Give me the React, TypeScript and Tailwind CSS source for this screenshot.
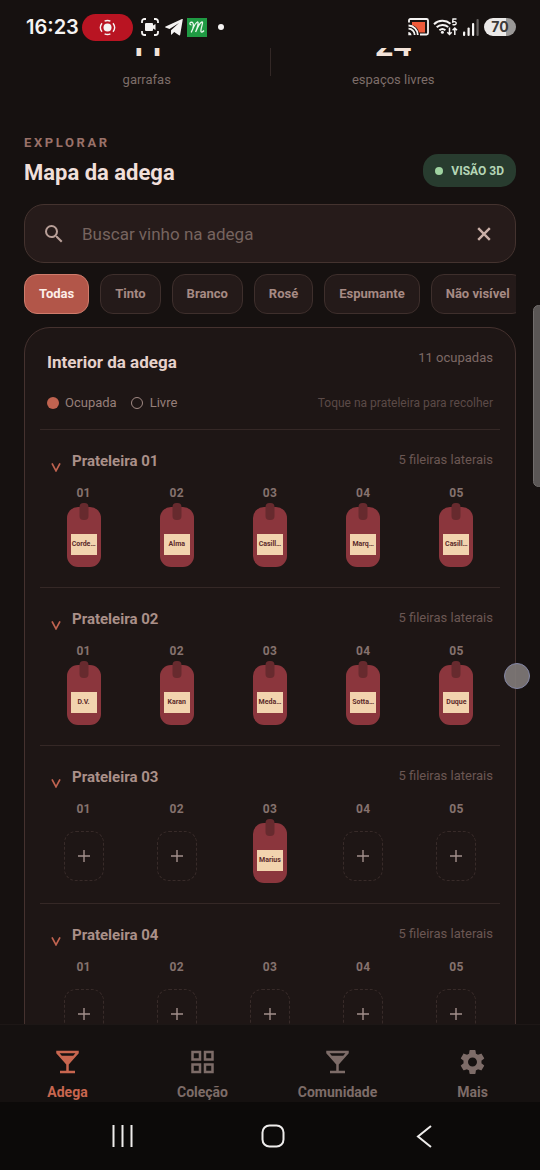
import type { ReactNode } from "react";
import { MdGridView, MdLocalBar, MdSearch, MdSettings } from "react-icons/md";

const filters = ["Todas", "Tinto", "Branco", "Rosé", "Espumante", "Não visível"];

const shelves: { name: string; slots: (string | null)[] }[] = [
  { name: "Prateleira 01", slots: ["Corde…", "Alma", "Casill…", "Marq…", "Casill…"] },
  { name: "Prateleira 02", slots: ["D.V.", "Karan", "Meda…", "Sotta…", "Duque"] },
  { name: "Prateleira 03", slots: [null, null, "Marius", null, null] },
  { name: "Prateleira 04", slots: [null, null, null, null, null] },
];

function StatusBar() {
  return (
    <header className="flex h-12 shrink-0 items-center justify-between pt-1.5 pr-6 pl-[26px] text-[#f5f3f2]">
      <div className="flex items-center">
        <span className="w-14 font-['Inter',sans-serif] text-[20px] leading-6 font-semibold">16:23</span>
        <span className="flex h-[27px] w-[51px] items-center justify-center rounded-full bg-[#b91422]">
          <svg width="17" height="17" viewBox="0 0 17 17" fill="none" stroke="currentColor" strokeWidth="1.4">
            <circle cx="8.5" cy="8.5" r="4" fill="currentColor" stroke="none" />
            <path d="M5.6 2.1a7 7 0 0 1 5.8 0M14 4.2a7 7 0 0 1 0 8.6M11.4 14.9a7 7 0 0 1-5.8 0M3 12.8a7 7 0 0 1 0-8.6" />
          </svg>
        </span>
        <svg className="ml-2" width="18" height="18" viewBox="0 0 18 18" fill="none" stroke="currentColor" strokeWidth="1.8">
          <path d="M1 5V3.5A2.5 2.5 0 0 1 3.5 1H5M13 1h1.5A2.5 2.5 0 0 1 17 3.5V5M17 13v1.5a2.5 2.5 0 0 1-2.5 2.5H13M5 17H3.5A2.5 2.5 0 0 1 1 14.5V13" />
          <path d="M5 5h6q1 0 1 1v1.500l2.500-1.600v6.200L12 10.500V12q0 1-1 1H5q-1 0-1-1V6q0-1 1-1z" fill="currentColor" stroke="none" />
        </svg>
        <svg className="ml-1.5" width="18" height="17" viewBox="0 0 18 17" fill="currentColor">
          <path d="M17.8.3 15.2 15.8q-.2.9-1.200.5L9.200 13l-2.500 2.600q-.6.400-.7-.4V11.300L14 4 4.500 9.900.5 8.600q-.9-.5.100-1.100L17 .1q.8-.3.8.2z" />
        </svg>
        <svg className="ml-1" width="20" height="19" viewBox="0 0 20 19">
          <rect width="20" height="19" fill="#1f9a43" />
          <path
            d="M4.500 6.800C2.600 7 2.200 4.300 4.400 4.200c3 0 2.400 6-.2 10.200C6.200 10 8 5 10.400 4c1.600-.4.200 5.500-1.800 10 2-5 4.400-9.500 6.400-10 1.800-.2-1.800 7.500-1 9.500.5 1.200 2 .4 3-1"
            fill="none"
            stroke="#e9f7ec"
            strokeWidth="1.3"
          />
        </svg>
        <span className="ml-[11px] size-1.5 rounded-full bg-[#f5f3f2]" />
      </div>
      <div className="flex items-center">
        <svg width="21" height="18" viewBox="0 0 21 18" fill="none" stroke="currentColor" strokeWidth="1.800">
          <path d="M4 4h13v10.500h-6A10 10 0 0 0 4 7z" fill="#ee5a3a" stroke="none" />
          <path d="M1 4.500V2.500Q1 1 2.500 1h16Q20 1 20 2.500v12.500q0 1.500-1.500 1.500H12" />
          <path d="M.5 7.500a9.500 9.500 0 0 1 9.300 9.500M.5 10.700a6.200 6.200 0 0 1 6.200 6.300" />
          <path d="M.3 14a3.500 3.500 0 0 1 3.200 3.300H.3z" fill="currentColor" stroke="none" />
        </svg>
        <svg className="ml-1" width="26" height="18" viewBox="0 0 26 18" fill="none" stroke="currentColor" strokeWidth="2">
          <path d="M1 6.200a12.500 12.500 0 0 1 16.500-.5M3.700 9.300a8.500 8.500 0 0 1 11.500-.2M6.400 12.200a4.700 4.700 0 0 1 6 0" />
          <circle cx="9.400" cy="14.300" r="1.500" fill="currentColor" stroke="none" />
          <path d="M16.500 9.500v7M14.300 14.200l2.200 2.300 2.200-2.300M21.800 17v-7M19.600 12.300l2.200-2.300 2.200 2.300" strokeWidth="1.500" />
          <path d="M23.500 1h-3.500l-.3 3c2-.8 3.800-.2 3.500 1.400-.2 1.500-2.200 1.800-3.700.9" strokeWidth="1.400" />
        </svg>
        <svg className="ml-1" width="17" height="17" viewBox="0 0 17 17" fill="currentColor">
          <rect x="0" y="12.500" width="2.200" height="4.500" rx="1" />
          <rect x="4.500" y="8.500" width="2.200" height="8.500" rx="1" />
          <rect x="9" y="4" width="2.200" height="13" rx="1" />
          <rect x="13.500" y="0" width="2.200" height="17" rx="1" opacity=".35" />
        </svg>
        <span className="ml-1 flex h-[18px] w-8 items-center justify-center rounded-full bg-linear-to-r from-[#ebe9e8] from-70% to-[#9a9897] to-70% font-['Inter',sans-serif] text-[14px] leading-[18px] font-bold text-[#3c3a39]">
          70
        </span>
      </div>
    </header>
  );
}

function Stat({ value, label }: { value: string; label: string }) {
  return (
    <div className="flex flex-col items-center">
      <span className="text-[32px] leading-10 font-bold text-[#f3e3d8]">{value}</span>
      <span className="mt-[5px] text-[13px] leading-5 text-[#7d6d69]">{label}</span>
    </div>
  );
}

function Bottle({ name }: { name: string }) {
  return (
    <button className="relative flex h-[60px] w-[34px] flex-col items-center rounded-[11px] bg-[#8b363d] pt-[27px]">
      <span className="absolute -top-1 left-1/2 h-[17px] w-[9px] -translate-x-1/2 rounded-[4px] bg-[#672a2e]" />
      <span className="h-[21px] w-[26px] overflow-hidden bg-[#f2d3ae] text-center text-[7px] leading-[21px] font-bold whitespace-nowrap text-[#5c2a2a]">
        {name}
      </span>
    </button>
  );
}

function EmptySlot() {
  return (
    <button
      aria-label="Adicionar vinho"
      className="mt-2 flex h-[50px] w-10 items-center justify-center rounded-[12px] border border-dashed border-[#382b29] text-[#a3908c]"
    >
      <svg width="12" height="12" viewBox="0 0 12 12" stroke="currentColor" strokeWidth="1.400">
        <path d="M6 0v12M0 6h12" />
      </svg>
    </button>
  );
}

function Shelf({ name, slots }: { name: string; slots: (string | null)[] }) {
  return (
    <section className="h-[158px] border-t border-[#352826] pt-5">
      <button className="flex w-full items-start justify-between px-[7px] text-left">
        <span className="flex items-start">
          <svg className="mt-[13px] ml-1 text-[#c06350]" width="10" height="9" viewBox="0 0 10 9" fill="none" stroke="currentColor" strokeWidth="1.700">
            <path d="M1 .4 5 7.800 9 .4" />
          </svg>
          <span className="ml-[11px] text-[15px] leading-[22px] font-bold text-[#aa9089]">{name}</span>
        </span>
        <span className="text-[13px] leading-5 text-[#6b5753]">5 fileiras laterais</span>
      </button>
      <ol className="mt-2.5 grid grid-cols-5 gap-1.5">
        {slots.map((slot, i) => (
          <li key={i} className="flex flex-col items-center">
            <span className="mb-[3px] text-[12px] leading-[22px] font-bold tracking-wide text-[#85726e]">0{i + 1}</span>
            {slot ? <Bottle name={slot} /> : <EmptySlot />}
          </li>
        ))}
      </ol>
    </section>
  );
}

function Tab({ icon, label, active }: { icon: ReactNode; label: string; active?: boolean }) {
  return (
    <a
      href="#"
      className={
        "flex flex-1 flex-col items-center gap-[5px] pt-[22px] text-[31px] " +
        (active ? "text-[#c8664f]" : "text-[#7d6c68]")
      }
    >
      {icon}
      <span className="text-[14px] leading-5 font-bold">{label}</span>
    </a>
  );
}

export default function App() {
  return (
    <div className="relative flex h-screen flex-col overflow-hidden bg-[#161110] font-['Roboto',sans-serif]">
      <StatusBar />
      <main className="min-h-0 flex-1 overflow-hidden px-6">
        <div className="-mt-[23px] grid grid-cols-[1fr_1px_1fr]">
          <Stat value="11" label="garrafas" />
          <div className="h-[51px] bg-[#332826]" />
          <Stat value="24" label="espaços livres" />
        </div>

        <div className="mt-[45px] flex items-end justify-between">
          <div>
            <p className="text-[13px] leading-4 font-bold tracking-[0.2em] text-[#9a7169]">EXPLORAR</p>
            <h1 className="mt-1.5 text-[22px] leading-8 font-bold text-[#f0dfda]">Mapa da adega</h1>
          </div>
          <button className="mb-0.5 flex h-[33px] items-center gap-2 rounded-[15px] bg-[#283c2f] px-3 text-[12px] font-bold text-[#b5d6b6]">
            <span className="size-2 rounded-full bg-[#9fd3a1]" />
            VISÃO 3D
          </button>
        </div>

        <label className="mt-[15px] flex h-[59px] items-center rounded-[20px] border border-[#44332f] bg-[#261b1a] pr-6 pl-[17px] text-[#b89f98]">
          <MdSearch className="size-6 shrink-0" />
          <input
            aria-label="Buscar vinho na adega"
            placeholder="Buscar vinho na adega"
            className="ml-4 min-w-0 flex-1 bg-transparent text-[17px] leading-6 outline-none placeholder:text-[#76645f]"
          />
          <button aria-label="Limpar busca" className="shrink-0 text-[#cbb0a8]">
            <svg width="14" height="14" viewBox="0 0 14 14" stroke="currentColor" strokeWidth="2.400">
              <path d="M1.200 1.200 12.800 12.800M12.800 1.200 1.200 12.800" />
            </svg>
          </button>
        </label>

        <div className="mt-[11px] flex gap-[11px] overflow-hidden">
          {filters.map((f, i) => (
            <button
              key={f}
              className={
                "h-10 shrink-0 rounded-[13px] border px-3.5 text-[13px] font-bold " +
                (i === 0
                  ? "border-[#cf7c6c] bg-[#b25649] text-[#fdeee8]"
                  : "border-[#3e2f2c] bg-[#241a19] text-[#a68a84]")
              }
            >
              {f}
            </button>
          ))}
        </div>

        <section className="mt-[13px] rounded-[26px] border border-[#45322f] bg-[#1e1615] px-[15px] pt-[18px]">
          <div className="flex items-start justify-between px-[7px]">
            <h2 className="text-[17px] leading-8 font-bold text-[#e6d1cb]">Interior da adega</h2>
            <span className="text-[13px] leading-6 text-[#7d6965]">11 ocupadas</span>
          </div>
          <div className="mt-[13px] flex items-center justify-between px-[7px]">
            <div className="flex items-center text-[13px] leading-6 text-[#967f79]">
              <span className="mr-1.5 size-3 rounded-full bg-[#c06350]" />
              Ocupada
              <span className="mr-[7px] ml-3.5 size-3 rounded-full border border-[#a18a84]" />
              Livre
            </div>
            <span className="text-[12px] leading-5 text-[#5b4a47]">Toque na prateleira para recolher</span>
          </div>
          <div className="mt-3.5">
            {shelves.map((s) => (
              <Shelf key={s.name} {...s} />
            ))}
          </div>
        </section>
      </main>

      <nav className="flex h-[78px] shrink-0 border-t border-[#1d1716] bg-[#151110]">
        <Tab icon={<MdLocalBar />} label="Adega" active />
        <Tab icon={<MdGridView />} label="Coleção" />
        <Tab icon={<MdLocalBar />} label="Comunidade" />
        <Tab icon={<MdSettings />} label="Mais" />
      </nav>

      <footer className="flex h-[68px] shrink-0 items-center justify-between bg-[#0c0a09] pr-[100px] pl-[106px] text-[#efedec]">
        <button aria-label="Recentes" className="flex w-8 justify-center">
          <svg width="21" height="22" viewBox="0 0 21 22" stroke="currentColor" strokeWidth="2">
            <path d="M1.500 0v22M10.500 0v22M19.500 0v22" />
          </svg>
        </button>
        <button aria-label="Início" className="flex w-8 justify-center">
          <svg width="24" height="24" viewBox="0 0 24 24" fill="none" stroke="currentColor" strokeWidth="2">
            <rect x="1.500" y="1.500" width="21" height="21" rx="7" />
          </svg>
        </button>
        <button aria-label="Voltar" className="flex w-8 justify-center">
          <svg width="16" height="23" viewBox="0 0 16 23" fill="none" stroke="currentColor" strokeWidth="2">
            <path d="M15 1 2 11.500 15 22" />
          </svg>
        </button>
      </footer>

      <span className="absolute top-[305px] -right-1 h-[182px] w-[11px] rounded-[6px] border border-[#716d6c] bg-[#5a5655]" />
      <span className="absolute top-[663px] right-[10px] size-[26px] rounded-full border border-[#8487a6] bg-[#817b7a]/90" />
    </div>
  );
}
